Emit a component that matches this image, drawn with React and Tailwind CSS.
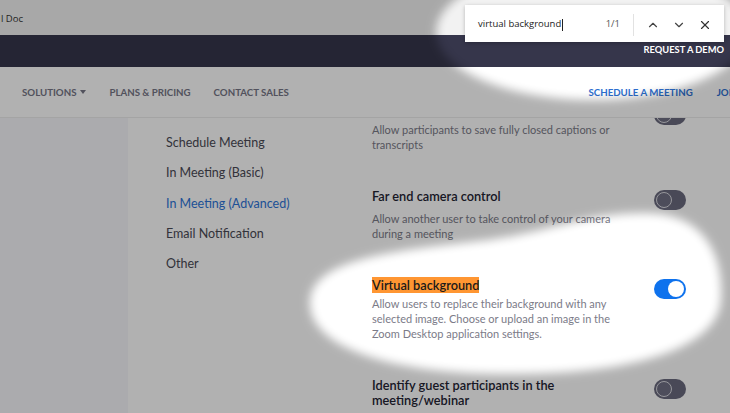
import React from 'react';
import { ChevronUp, ChevronDown, X } from 'lucide-react';

function Toggle({ on, className = '' }) {
  if (on) {
    return (
      <div className={`w-[32px] h-[20px] rounded-full bg-[#0e72ed] flex items-center justify-end pr-[2px] shrink-0 ${className}`}>
        <div className="w-[16px] h-[16px] rounded-full bg-white" />
      </div>
    );
  }
  return (
    <div className={`w-[32px] h-[20px] rounded-full bg-[#6a6a7e] flex items-center pl-[2px] shrink-0 ${className}`}>
      <div className="w-[16px] h-[16px] rounded-full bg-[#6f6f83] border-[1.5px] border-[#d9d9e0]" />
    </div>
  );
}

function Setting({ title, desc, on, highlight }) {
  return (
    <div className="flex py-[17px]">
      <div className="w-[282px]">
        <div className="text-[12.75px] leading-[20px] font-semibold text-[#232333]">
          {highlight ? <span className="bg-[#ff9632] text-[#1a1a1a]">{title}</span> : title}
        </div>
        <div className={`${highlight ? 'mt-[1px]' : 'mt-[5px]'} w-[250px] text-[11px] leading-[15px] text-[#7b7b88]`}>{desc}</div>
      </div>
      <Toggle on={on} className="mt-[4px]" />
    </div>
  );
}

const menu = [
  'Schedule Meeting',
  'In Meeting (Basic)',
  'In Meeting (Advanced)',
  'Email Notification',
  'Other',
];

export default function App() {
  return (
    <div className="relative w-[730px] h-[413px] overflow-hidden bg-white font-['Lato','Noto_Sans',sans-serif]">
      {/* browser strip */}
      <div className="h-[35px] bg-[#f2f2f2] flex items-center pt-[4px]">
        <span className="text-[9.5px] text-[#333] font-['Open_Sans',sans-serif] ml-[1px]">l Doc</span>
      </div>

      {/* dark top bar */}
      <div className="h-[32px] bg-[#36364b] flex items-end justify-end pb-[10px] pr-[6px]">
        <span className="text-[9.3px] font-bold text-white">REQUEST A DEMO</span>
      </div>

      {/* nav */}
      <div className="h-[51px] bg-white border-b border-[#ececec] flex items-center text-[9.7px] font-bold text-[#767686] whitespace-nowrap">
        <span className="ml-[22px] flex items-center gap-[4px]">
          SOLUTIONS
          <span className="w-0 h-0 border-l-[3.5px] border-r-[3.5px] border-t-[4px] border-l-transparent border-r-transparent border-t-[#767686]" />
        </span>
        <span className="ml-[23px]">PLANS &amp; PRICING</span>
        <span className="ml-[23px]">CONTACT SALES</span>
        <span className="ml-auto text-[#2d6fd0]">SCHEDULE A MEETING</span>
        <span className="ml-[24px] -mr-[9px] text-[#2d6fd0]">JOIN</span>
      </div>

      {/* body */}
      <div className="flex h-[295px]">
        <div className="w-[128px] bg-[#f7f7fb]" />
        <div className="w-[206px] pl-[38px] pt-[10px]">
          {menu.map((m) => (
            <div
              key={m}
              className={`h-[30.3px] leading-[30px] text-[12.5px] ${m === 'In Meeting (Advanced)' ? 'text-[#2d74d8]' : 'text-[#4a4a55]'}`}
            >
              {m}
            </div>
          ))}
        </div>
        <div className="flex-1 overflow-hidden pl-[38px]">
          <div className="flex -mt-[13px] pb-[17px]">
            <div className="w-[282px] pt-[17px]">
              <div className="w-[250px] text-[11px] leading-[15px] text-[#7b7b88]">
                Allow participants to save fully closed captions or transcripts
              </div>
            </div>
            <Toggle on={false} />
          </div>
          <Setting
            title="Far end camera control"
            desc="Allow another user to take control of your camera during a meeting"
          />
          <Setting
            title="Virtual background"
            highlight
            on
            desc="Allow users to replace their background with any selected image. Choose or upload an image in the Zoom Desktop application settings."
          />
          <div className="flex pt-[17px]">
            <div className="w-[282px] text-[12.75px] leading-[15px] py-[2.5px] font-semibold text-[#232333] pr-[60px]">
              Identify guest participants in the meeting/webinar
            </div>
            <Toggle on={false} className="mt-[4px]" />
          </div>
        </div>
      </div>

      {/* spotlight overlay */}
      <svg className="absolute inset-0 pointer-events-none" width="730" height="413" viewBox="0 0 730 413">
        <defs>
          <filter id="soft" filterUnits="userSpaceOnUse" x="0" y="-50" width="730" height="500">
            <feGaussianBlur stdDeviation="5" />
          </filter>
          <mask id="spot" maskUnits="userSpaceOnUse" x="0" y="0" width="730" height="413">
            <rect x="0" y="0" width="730" height="413" fill="white" />
            <g filter="url(#soft)">
              <ellipse cx="592" cy="32" rx="156" ry="68" fill="black" />
              <path
                d="M 310 305 C 308 262, 380 252, 470 242 C 550 234, 580 212, 648 213 C 702 214, 724 252, 721 300 C 718 346, 640 373, 520 374 C 400 376, 312 350, 310 305 Z"
                fill="black"
              />
            </g>
          </mask>
        </defs>
        <rect x="0" y="0" width="730" height="413" fill="black" opacity="0.3" mask="url(#spot)" />
      </svg>

      {/* find bar */}
      <div className="absolute left-[465px] top-[5px] w-[259px] h-[37px] pt-[2px] bg-white shadow-[0_1px_4px_rgba(0,0,0,0.25)] flex items-center font-['Open_Sans',sans-serif] text-[9.5px] text-[#222]">
        <span className="ml-[13px]">virtual background</span>
        <span className="w-px h-[12px] bg-[#222] ml-[1px]" />
        <span className="ml-auto text-[#555]">1/1</span>
        <span className="ml-[13px] w-px h-[22px] bg-[#e2e2e2]" />
        <ChevronUp size={14} strokeWidth={2} className="ml-[12px] text-[#444]" />
        <ChevronDown size={14} strokeWidth={2} className="ml-[12px] text-[#444]" />
        <X size={14} strokeWidth={2} className="ml-[12px] mr-[12px] text-[#333]" />
      </div>
    </div>
  );
}
